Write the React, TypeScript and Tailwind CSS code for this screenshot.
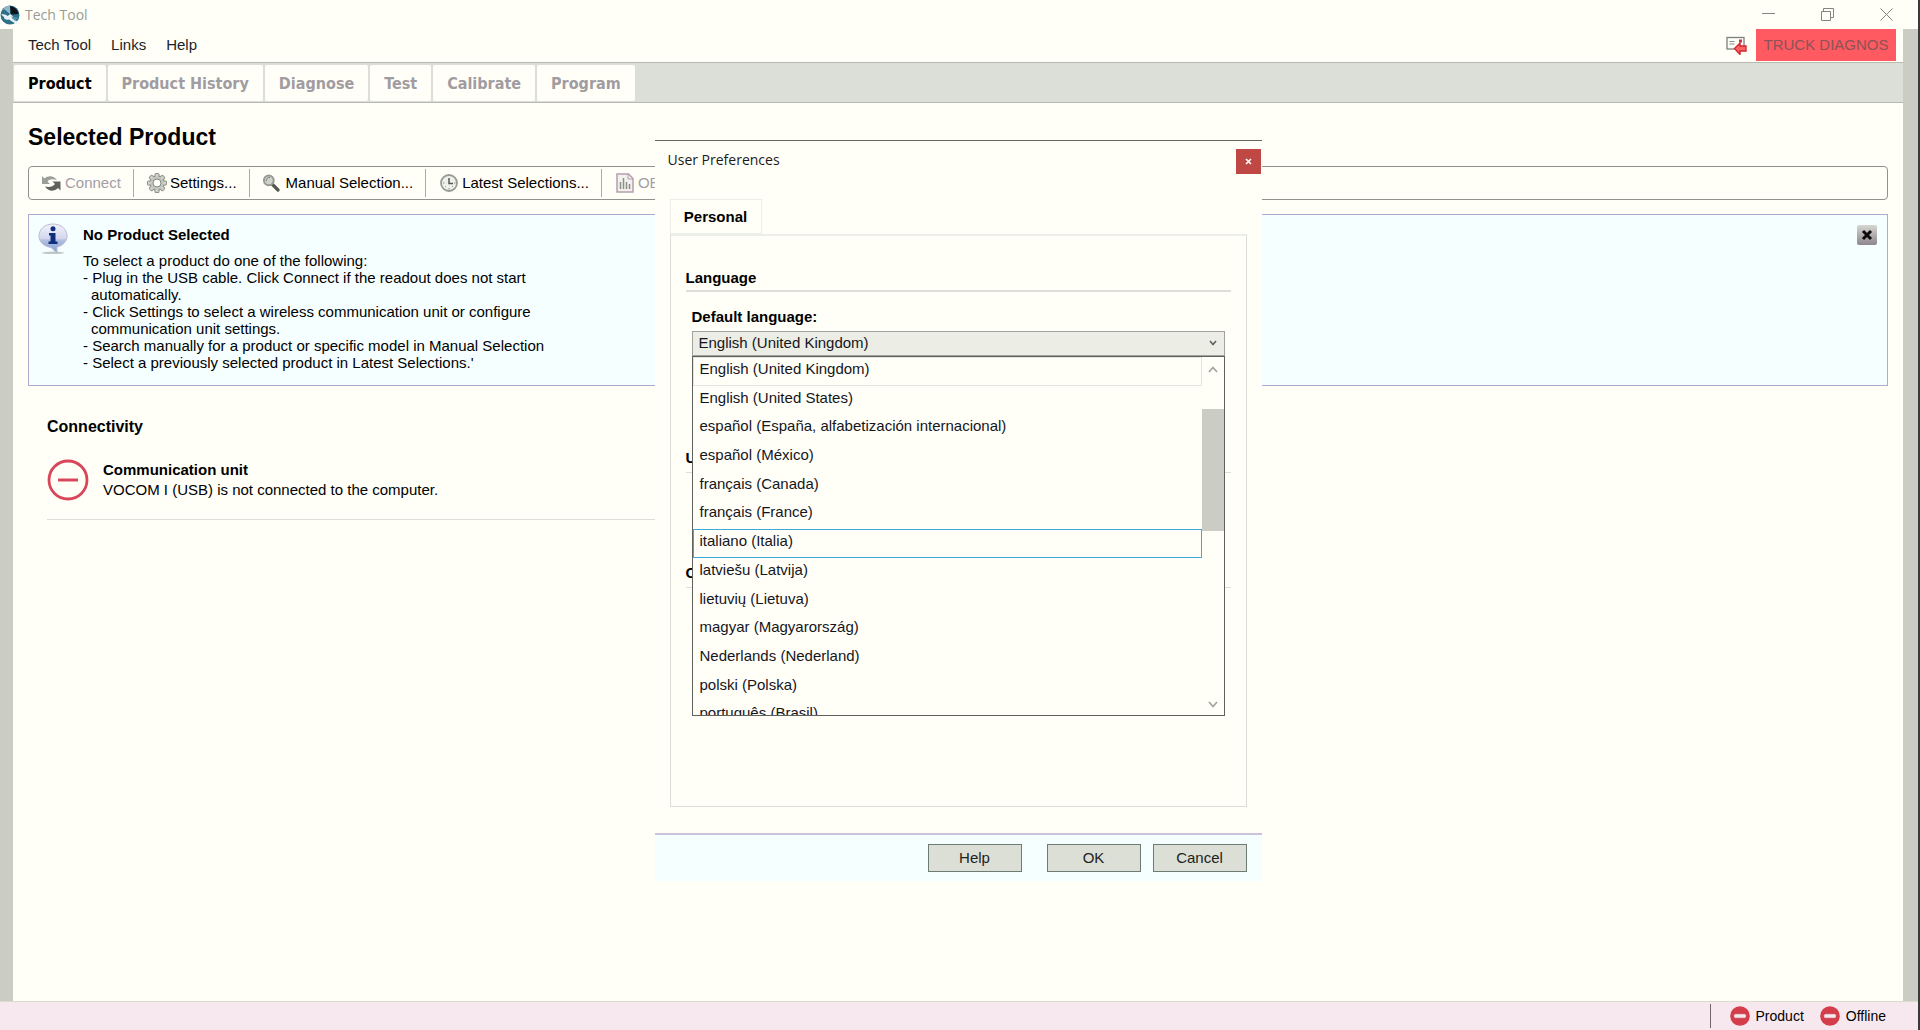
import React, { useState } from 'react';
import clsx from 'clsx';

const tabs = ['Product', 'Product History', 'Diagnose', 'Test', 'Calibrate', 'Program'];

const languages = [
  'English (United Kingdom)',
  'English (United States)',
  'español (España, alfabetización internacional)',
  'español (México)',
  'français (Canada)',
  'français (France)',
  'italiano (Italia)',
  'latviešu (Latvija)',
  'lietuvių (Lietuva)',
  'magyar (Magyarország)',
  'Nederlands (Nederland)',
  'polski (Polska)',
  'português (Brasil)',
];

const AppIcon = () => (
  <svg viewBox="0 0 20 20" className="w-5 h-5">
    <circle cx="10" cy="10" r="9.5" fill="#2d7089" />
    <path d="M2 6a9.5 9.5 0 0 1 8-5.5V9L4 4Z" fill="#8fb9c8" />
    <path d="M10 1a9 9 0 0 1 8.5 8L11 9.5Z" fill="#0d141b" />
    <path d="M1 9.5c3-.8 5 0 6.500 1.500l3-2 3.500 3.500-2 .5 6 4-2 2-7-4.500c-3 1-5-.5-5-2.500z" fill="#e6f2f5" />
    <path d="M11 11.500 18.500 12.500 15 16Z" fill="#4b91a8" />
  </svg>
);

const ConnectIcon = () => (
  <svg viewBox="0 0 20 18" className="w-5 h-[18px]">
    <path d="M1 2v8h8L6.500 7.500C8 5 12 4.500 16 6 13 1.500 7 1 3.500 4.500Z" fill="#9a9e96" />
    <path d="M19.500 16.500V7.500h-8l2.500 2.500c-2 3-6 3.500-10 2.500 3 5 9 5.500 13 1.500Z" fill="#5e625b" />
  </svg>
);

const GearIcon = () => (
  <svg viewBox="0 0 22 22" className="w-[22px] h-[22px]">
    <g fill="#8e938a">
      {[0, 45, 90, 135].map((angle) => (
        <rect key={angle} x="8.500" y="1" width="5" height="20" rx="1.500" transform={`rotate(${angle} 11 11)`} />
      ))}
    </g>
    <circle cx="11" cy="11" r="7.800" fill="#8e938a" />
    <g fill="#d0d3cb">
      {[0, 45, 90, 135].map((angle) => (
        <rect key={angle} x="9.500" y="2" width="3" height="18" transform={`rotate(${angle} 11 11)`} />
      ))}
    </g>
    <circle cx="11" cy="11" r="6.500" fill="#c3c7be" />
    <circle cx="11" cy="11" r="4" fill="#fffff8" stroke="#858a81" />
  </svg>
);

const SearchIcon = () => (
  <svg viewBox="0 0 18 18" className="w-[18px] h-[18px]">
    <path d="m10.500 10.500 5.500 5.500" stroke="#555850" strokeWidth="3.200" strokeLinecap="round" />
    <circle cx="6.800" cy="6.300" r="4.900" fill="#cdd2ca" stroke="#969a92" strokeWidth="2" />
    <path d="M4.500 7a3 3 0 0 1 3.500-3.500" stroke="#777c74" fill="none" />
  </svg>
);

const ClockIcon = () => (
  <svg viewBox="0 0 18 18" className="w-[18px] h-[18px]">
    <circle cx="9" cy="9" r="8" fill="#eef0ea" stroke="#979b94" strokeWidth="1.800" />
    <path d="M9 4v5.500h4" stroke="#555952" strokeWidth="1.500" fill="none" />
    <path d="M9 14v1.500M3 9h1.500M14 9h1.500M5 13l.8-.8M13 13l-.8-.8" stroke="#8d918a" />
  </svg>
);

const ReportIcon = () => (
  <svg viewBox="0 0 18 20" className="w-[18px] h-5">
    <path d="M1 1h11.500L17 5.500V19H1Z" fill="#f4f0ee" stroke="#b39fb0" strokeWidth="1.500" />
    <path d="M12 1v5h5" stroke="#b39fb0" fill="none" />
    <path d="M4.500 16V9M7.500 16V5M10.500 16v-7M13.500 16v-5" stroke="#8b9188" strokeWidth="1.500" />
  </svg>
);

const MailIcon = () => (
  <svg viewBox="0 0 21 19" className="w-[21px] h-[19px]">
    <rect x="1" y="1.500" width="17" height="11.500" fill="#fffffa" stroke="#7d8079" strokeWidth="1.300" />
    <path d="M3.500 5.500h5M3.500 8h5" stroke="#8b8f88" />
    <rect x="13" y="3.500" width="3" height="3" fill="#c3364a" />
    <path d="M8.500 12.500 14 7v3h6v5h-6v3.500Z" fill="#ff6464" stroke="#d3202a" strokeWidth="1.300" />
  </svg>
);

const InfoIcon = () => (
  <svg viewBox="0 0 30 32" className="w-[30px] h-8">
    <defs>
      <linearGradient id="bubble" x1="0" y1="0" x2="0" y2="1">
        <stop offset="0" stopColor="#f4f3fb" />
        <stop offset="0.500" stopColor="#d3d6ee" />
        <stop offset="0.550" stopColor="#b3c0e0" />
        <stop offset="1" stopColor="#84a0d8" />
      </linearGradient>
    </defs>
    <ellipse cx="15" cy="29.800" rx="11.500" ry="1.300" fill="#bfc8c5" />
    <path d="M15 1C7 1 1 6 1 13c0 6 5 10.500 12 11.500l6 5.500v-6C25 22.500 29 18.500 29 13 29 6 23 1 15 1Z" fill="url(#bubble)" stroke="#b9bcd2" />
    <circle cx="15" cy="5.800" r="2.500" fill="#10307f" />
    <path d="M11 10h6.500v8.500H19.500V21h-9v-2.500h2V12.500H11Z" fill="#10307f" />
  </svg>
);

const NoEntryIcon = () => (
  <svg viewBox="0 0 20 20" className="w-5 h-5">
    <circle cx="10" cy="10" r="9.800" fill="#d43d49" />
    <rect x="3.800" y="7.800" width="12.400" height="4.400" rx="1.500" fill="#f6e9ee" stroke="#b52f3d" strokeWidth="0.600" />
  </svg>
);

const ToolButton = ({
  icon,
  label,
  disabled,
  className,
}: {
  icon: React.ReactNode;
  label: string;
  disabled?: boolean;
  className?: string;
}) => (
  <button
    disabled={disabled}
    className={clsx('flex items-center whitespace-nowrap', disabled ? 'text-[#a39da6]' : 'text-black', className)}
  >
    {icon}
    {label}
  </button>
);

const Preferences = () => {
  const [language, setLanguage] = useState(languages[0]);
  const [hovered, setHovered] = useState('italiano (Italia)');

  return (
    <div role="dialog" aria-labelledby="prefs-title" className="w-[607px] bg-[#fffff8] border-t border-[#67675f]">
      <header className="flex items-start justify-between pl-[13px] pr-px pt-2">
        <h2 id="prefs-title" className="font-['Open_Sans',sans-serif] text-sm leading-[22px] text-[#1a1a1a]">
          User Preferences
        </h2>
        <button aria-label="Close" className="w-[25px] h-[25px] bg-[#bf4844] flex items-center justify-center">
          <svg viewBox="0 0 7 7" className="w-[7px] h-[7px]">
            <path d="m1 1 5 5M6 1 1 6" stroke="#fff" strokeWidth="1.600" />
          </svg>
        </button>
      </header>

      <div className="px-[15px] pt-[25px]">
        <button className="block w-[92px] h-[35px] pt-0.5 border border-[#eceee8] font-bold">Personal</button>
        <div className="h-[573px] border border-[#dcded8] border-t-2 border-t-[#eceee8] px-[15px] pt-8">
          <h3 className="h-6 border-b-2 border-[#dcdfd7] font-bold leading-5">Language</h3>
          <div className="px-[6px] pt-4">
            <label htmlFor="language" className="block h-[23px] font-bold leading-[18px]">
              Default language:
            </label>
            <div className="relative">
              <select
                id="language"
                value={language}
                onChange={(e) => setLanguage(e.target.value)}
                className="block w-full h-[25px] appearance-none border border-[#a0a49c] bg-[#eceee6] px-[6px] text-[#15151c]"
              >
                {languages.map((item) => (
                  <option key={item}>{item}</option>
                ))}
              </select>
              <svg viewBox="0 0 8 6" className="absolute right-2 top-[9px] w-2 h-1.5">
                <path d="m1 1 3 3.500L7 1" stroke="#5f625c" strokeWidth="1.600" fill="none" />
              </svg>

              {/* Open drop-down list */}
              <div className="absolute inset-x-0 top-[25px] z-10 h-[360px] flex overflow-hidden border border-[#5f625c] bg-[#fffff8]">
                <ul role="listbox" aria-label="Languages" className="grow h-[373px] grid auto-rows-fr">
                  {languages.map((item) => (
                    <li
                      key={item}
                      role="option"
                      aria-selected={item === language}
                      onMouseEnter={() => setHovered(item)}
                      onClick={() => setLanguage(item)}
                      className={clsx(
                        'border px-[6px] leading-[22px] text-[#15151c]',
                        item === hovered
                          ? 'border-[#3fa9d9]'
                          : item === language
                            ? 'border-[#e3e5df]'
                            : 'border-transparent'
                      )}
                    >
                      {item}
                    </li>
                  ))}
                </ul>
                <div className="w-[22px] h-full shrink-0 flex flex-col items-center">
                  <svg viewBox="0 0 10 7" className="mt-[9px] w-2.5 h-[7px]">
                    <path d="m1 6 4-4.500L9 6" stroke="#a3a69f" strokeWidth="1.800" fill="none" />
                  </svg>
                  <div className="mt-9 w-full h-[122px] bg-[#cbcdc5]" />
                  <svg viewBox="0 0 10 7" className="mt-auto mb-[7px] w-2.5 h-[7px]">
                    <path d="m1 1 4 4.500L9 1" stroke="#a3a69f" strokeWidth="1.800" fill="none" />
                  </svg>
                </div>
              </div>
            </div>
          </div>
          <h3 className="mt-[92px] h-[25px] border-b border-[#dcdfd7] font-bold leading-5">U</h3>
          <h3 className="mt-[90px] h-[25px] border-b border-[#dcdfd7] font-bold leading-5">C</h3>
        </div>
      </div>

      <footer className="mt-[26px] h-12 flex items-center justify-end border-t-2 border-[#ccc3da] bg-[#f6ffff] px-[15px]">
        <button className="w-[94px] h-7 mr-[25px] border border-[#6d7b74] bg-[#dcdfd5] text-[#222]">Help</button>
        <button className="w-[94px] h-7 mr-3 border border-[#6d7b74] bg-[#dcdfd5] text-[#222]">OK</button>
        <button className="w-[94px] h-7 border border-[#6d7b74] bg-[#dcdfd5] text-[#222]">Cancel</button>
      </footer>
    </div>
  );
};

const App = () => {
  const [activeTab, setActiveTab] = useState('Product');

  return (
    <div className="relative min-h-screen flex flex-col bg-[#fffff8] border-r-2 border-[#3a3a3a] font-['Liberation_Sans',Arial,sans-serif] text-[15px] text-black">
      {/* Title bar */}
      <header className="h-[29px] flex items-center">
        <AppIcon />
        <span className="ml-[5px] font-['Open_Sans',sans-serif] text-sm text-[#9a9a96]">Tech Tool</span>
        <div className="ml-auto flex h-full pr-[2px]">
          <button aria-label="Minimize" className="w-[59px] flex items-center justify-center">
            <svg viewBox="0 0 13 13" className="w-[13px] h-[13px]">
              <path d="M0 5.500h13" stroke="#85857f" />
            </svg>
          </button>
          <button aria-label="Restore" className="w-[59px] flex items-center justify-center">
            <svg viewBox="0 0 13 13" className="w-[13px] h-[13px]">
              <path d="M.5 3.500h9v9h-9zM2.500 3V.5h10v9H10" stroke="#85857f" fill="none" />
            </svg>
          </button>
          <button aria-label="Close window" className="w-[59px] flex items-center justify-center">
            <svg viewBox="0 0 13 13" className="w-[13px] h-[13px]">
              <path d="m.5.5 12 12M12.500.5l-12 12" stroke="#85857f" />
            </svg>
          </button>
        </div>
      </header>

      <div className="grow flex flex-col border-l-[13px] border-r-[15px] border-[#cbcdc5]">
        {/* Menu row */}
        <div className="h-[34px] flex items-center border-b border-[#b6bab1] pl-[15px] pr-[7px]">
          <nav className="flex gap-5 text-[#1e1e26]">
            <button>Tech Tool</button>
            <button>Links</button>
            <button>Help</button>
          </nav>
          <div className="ml-auto flex h-full items-center gap-[9px]">
            <MailIcon />
            <div className="w-[140px] h-8 self-start bg-[#ff5a61] text-center leading-8 text-[#8a5355]">
              TRUCK DIAGNOS
            </div>
          </div>
        </div>

        {/* Main tabs */}
        <div className="h-10 flex gap-[2px] items-center border-b border-[#b6bab1] bg-[#dcdfd7] pl-px">
          {tabs.map((tab) => (
            <button
              key={tab}
              onClick={() => setActiveTab(tab)}
              className={clsx(
                "h-9 px-[14px] pt-0.5 rounded-xs bg-[#fffff8] font-['DejaVu_Sans_Condensed','DejaVu_Sans',sans-serif] text-base font-bold",
                tab === activeTab ? 'text-black' : 'text-[#a19ca1]'
              )}
            >
              {tab}
            </button>
          ))}
        </div>

        <main className="grow px-[15px]">
          <h1 className="mt-[18px] text-[23px] leading-8 font-bold">Selected Product</h1>

          {/* Toolbar */}
          <div className="mt-[13px] h-[34px] flex items-center divide-x divide-[#a9ada5] rounded border border-[#8f938b] [&>button]:h-7">
            <ToolButton icon={<ConnectIcon />} label="Connect" disabled className="gap-1 pl-3 pr-3" />
            <ToolButton icon={<GearIcon />} label="Settings..." className="gap-0.5 pl-3 pr-3" />
            <ToolButton icon={<SearchIcon />} label="Manual Selection..." className="gap-1.5 pl-3 pr-3" />
            <ToolButton icon={<ClockIcon />} label="Latest Selections..." className="gap-1 pl-[14px] pr-3" />
            <ToolButton icon={<ReportIcon />} label="OBD" disabled className="gap-1 pl-[14px]" />
          </div>

          {/* Info box */}
          <section className="mt-[14px] h-[172px] flex border border-[#b0a9cf] bg-[#f6ffff] pl-[9px] pr-[10px]">
            <div className="pt-2">
              <InfoIcon />
            </div>
            <div className="ml-[15px] pt-2.5">
              <h2 className="font-bold leading-5">No Product Selected</h2>
              <div className="mt-[7px] leading-[17px]">
                <p>To select a product do one of the following:</p>
                <p>- Plug in the USB cable. Click Connect if the readout does not start</p>
                <p className="pl-2">automatically.</p>
                <p>- Click Settings to select a wireless communication unit or configure</p>
                <p className="pl-2">communication unit settings.</p>
                <p>- Search manually for a product or specific model in Manual Selection</p>
                <p>- Select a previously selected product in Latest Selections.'</p>
              </div>
            </div>
            <button
              aria-label="Dismiss"
              className="ml-auto mt-2.5 w-5 h-5 rounded-xs bg-linear-to-b from-[#d5d8d0] to-[#8f868e] flex items-center justify-center"
            >
              <svg viewBox="0 0 12 12" className="w-3 h-3">
                <path d="m2 2 8 8M10 2l-8 8" stroke="#0c0c0c" strokeWidth="3" />
              </svg>
            </button>
          </section>

          {/* Connectivity */}
          <section className="ml-[19px] mt-[31px] w-1/2 border-b border-[#dcdfd7] pb-[18px]">
            <h2 className="text-base leading-5 font-bold">Connectivity</h2>
            <div className="mt-[22px] flex items-center">
              <svg viewBox="0 0 42 42" className="w-[42px] h-[42px]">
                <circle cx="21" cy="21" r="19" fill="none" stroke="#d9465a" strokeWidth="2.800" />
                <path d="M11 21h20" stroke="#d9465a" strokeWidth="3" />
              </svg>
              <div className="ml-[14px]">
                <h3 className="font-bold leading-5">Communication unit</h3>
                <p className="leading-5">VOCOM I (USB) is not connected to the computer.</p>
              </div>
            </div>
          </section>
        </main>
      </div>

      {/* Status bar */}
      <footer className="h-[29px] flex items-center justify-end border-t border-[#dcdbd0] bg-[#f7e8ef] pr-8 text-sm">
        <div className="mr-[19px] h-6 w-px bg-[#6f6468]" />
        <div className="flex items-center gap-1.5">
          <NoEntryIcon />
          Product
        </div>
        <div className="ml-4 flex items-center gap-1.5">
          <NoEntryIcon />
          Offline
        </div>
      </footer>

      <div className="absolute inset-x-0 top-[140px] flex justify-center pr-0.5">
        <Preferences />
      </div>
    </div>
  );
};

export default App;
